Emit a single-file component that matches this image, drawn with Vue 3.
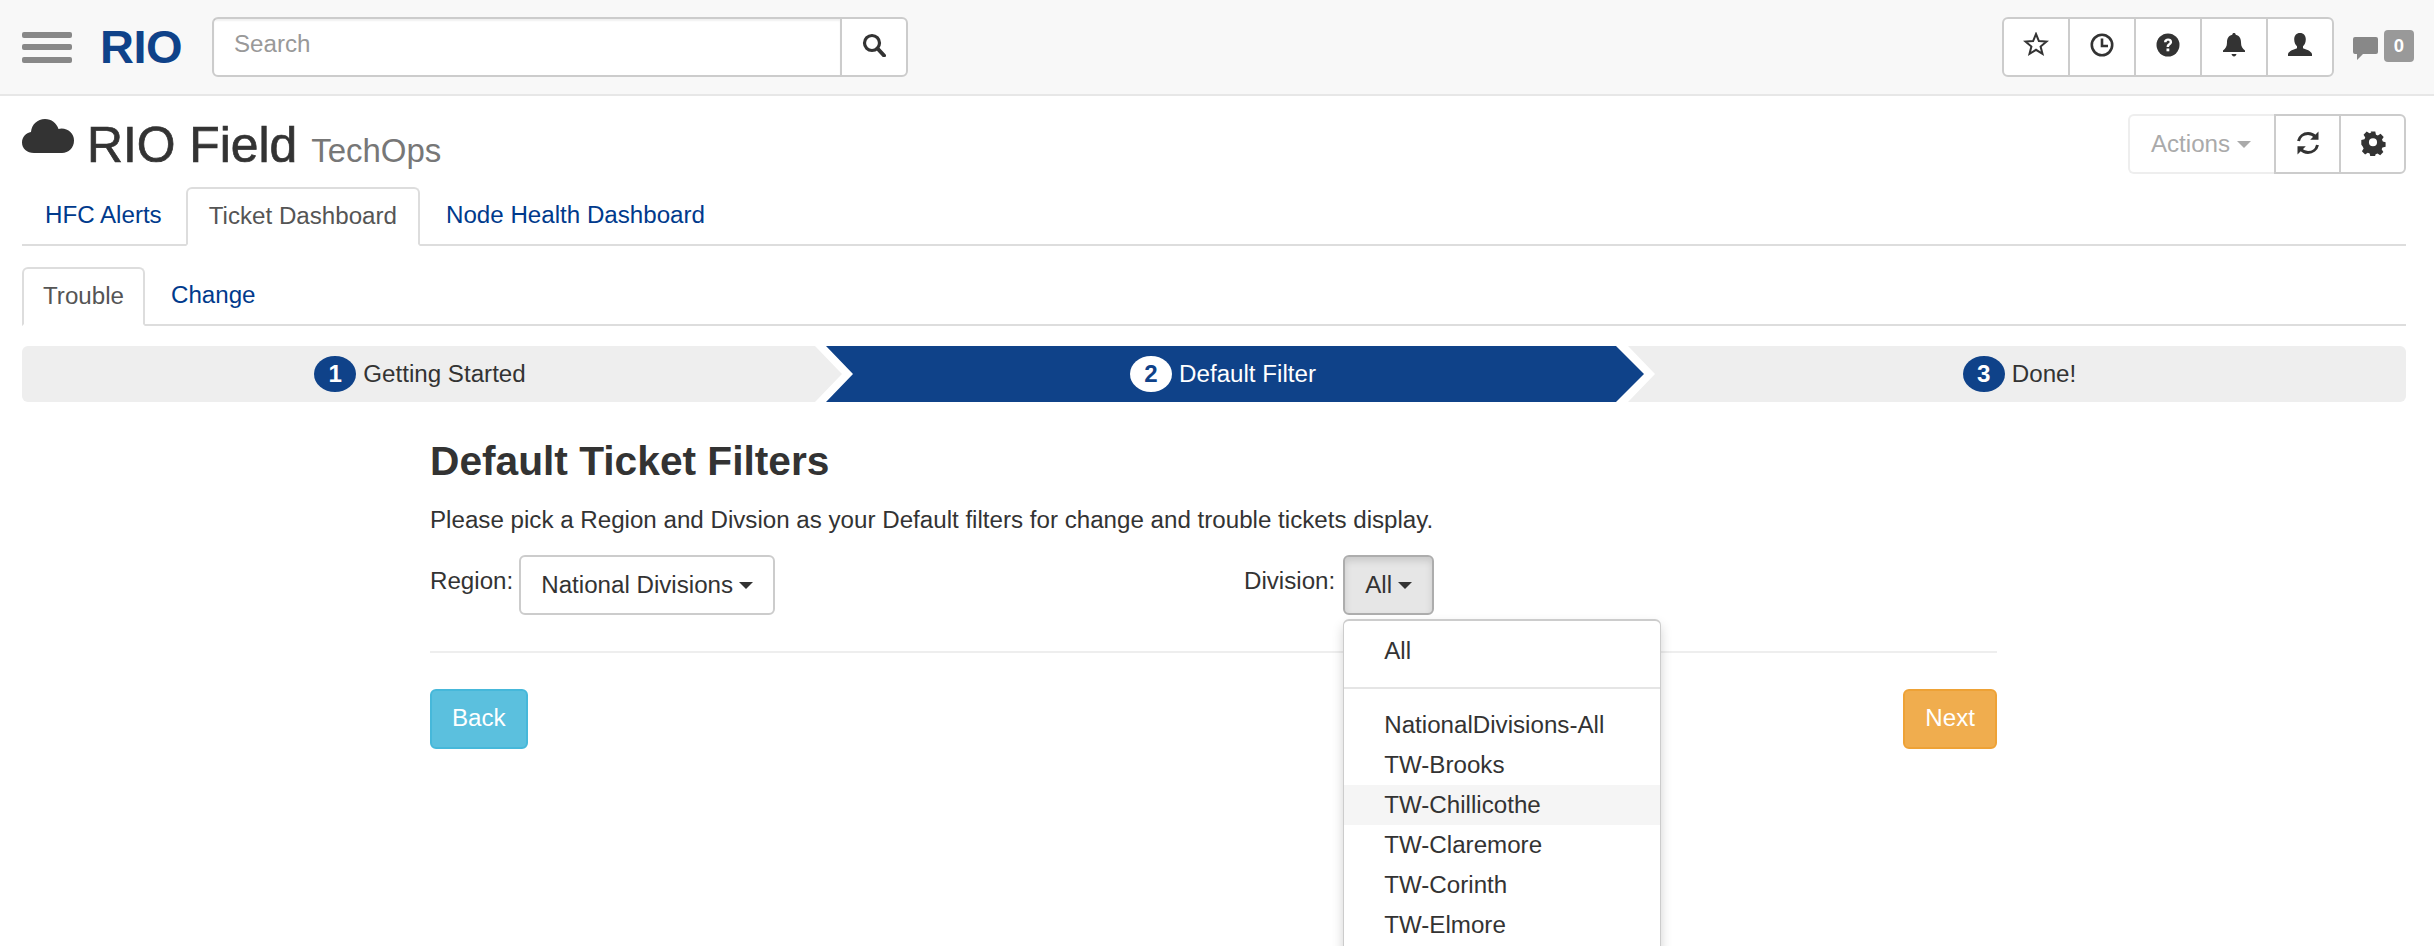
<template>
  <div class="page">
    <nav class="navbar">
      <div class="burger"><span></span><span></span><span></span></div>
      <div class="logo">RIO</div>
      <div class="search">
        <div class="search-input">Search</div>
        <div class="search-btn">
          <svg width="24" height="24" viewBox="0 0 24 24"><circle cx="10" cy="10" r="7.5" fill="none" stroke="#333" stroke-width="3.2"/><path d="M15.5 15.5L22 22.5" stroke="#333" stroke-width="4" stroke-linecap="round"/></svg>
        </div>
      </div>
      <div class="nav-right">
        <div class="btn-group">
          <div class="icon-btn">
            <svg width="26" height="26" viewBox="0 0 26 26"><path d="M13 2l2.9 7.1 7.6.5-5.900 4.900 1.900 7.400L13 17.800l-6.500 4.100 1.900-7.400-5.900-4.900 7.600-.5z" fill="none" stroke="#333" stroke-width="2"/></svg>
          </div>
          <div class="icon-btn">
            <svg width="26" height="26" viewBox="0 0 26 26"><circle cx="13" cy="13" r="10.2" fill="none" stroke="#333" stroke-width="2.6"/><path d="M13 6.5V14h6" fill="none" stroke="#333" stroke-width="2.6"/></svg>
          </div>
          <div class="icon-btn">
            <svg width="26" height="26" viewBox="0 0 26 26"><circle cx="13" cy="13" r="11.5" fill="#333"/><path d="M9 10.2c0-2.4 1.8-3.6 4.1-3.6 2.3 0 4 1.2 4 3.3 0 2.700-3 2.800-3 5h-2.500c0-3.300 3-3.400 3-4.900 0-.8-.6-1.300-1.500-1.300-1 0-1.500.6-1.600 1.500z" fill="#fff"/><rect x="11.500" y="16.500" width="2.800" height="2.800" fill="#fff"/></svg>
          </div>
          <div class="icon-btn">
            <svg width="24" height="26" viewBox="0 0 24 26"><path d="M12 1c1 0 1.700.7 1.700 1.700C17.500 3.500 19 6.500 19 10.500c0 4 1.500 6 4 8v1.500H1v-1.500c2.500-2 4-4 4-8 0-4 1.500-7 5.300-7.800C10.300 1.700 11 1 12 1z" fill="#333"/><path d="M9.500 22h5c-.4 1.600-1.200 2.500-2.500 2.500S9.900 23.600 9.500 22z" fill="#333"/></svg>
          </div>
          <div class="icon-btn">
            <svg width="26" height="26" viewBox="0 0 26 26"><path d="M13 1c3.700 0 5.800 2.500 5.800 6.300 0 3-1.200 5.700-2.800 6.900v2c3 1.200 8 2.400 9 5.800v2H1v-2c1-3.400 6-4.600 9-5.800v-2C8.400 13 7.200 10.300 7.200 7.300 7.200 3.500 9.300 1 13 1z" fill="#333"/></svg>
          </div>
        </div>
        <svg class="chat" width="25" height="24" viewBox="0 0 25 24"><path d="M2 0h21a2 2 0 0 1 2 2v13a2 2 0 0 1-2 2H10l-6 6v-6H2a2 2 0 0 1-2-2V2a2 2 0 0 1 2-2z" fill="#888"/></svg>
        <span class="badge">0</span>
      </div>
    </nav>

    <main class="main">
      <header class="title-row">
        <svg class="cloud" width="52" height="34" viewBox="0 0 52 34"><path d="M12 34C5 34 0 29.500 0 23.500 0 18 4 14 9 13 9.500 5.500 15.500 0 23 0c6.500 0 11.500 4 13.500 10 1-.3 2-.5 3-.5C46.500 9.500 52 14.500 52 21.500 52 29 46.500 34 40 34z" fill="#333"/></svg>
        <h1>RIO Field <small>TechOps</small></h1>
        <div class="actions">
          <div class="actions-btn">Actions <i class="caret"></i></div>
          <div class="icon-btn wide">
            <svg width="26" height="26" viewBox="0 0 26 26"><path d="M3.500 11C4.500 6.500 8.500 3.500 13 3.500c3 0 5.500 1.200 7.300 3.200" fill="none" stroke="#333" stroke-width="3"/><path d="M23.500 1.500v8.300h-8.300z" fill="#333"/><path d="M22.500 15c-1 4.500-5 7.500-9.500 7.500-3 0-5.500-1.200-7.300-3.200" fill="none" stroke="#333" stroke-width="3"/><path d="M2.500 24.500v-8.300h8.300z" fill="#333"/></svg>
          </div>
          <div class="icon-btn wide">
            <svg width="26" height="26" viewBox="0 0 26 26"><path fill-rule="evenodd" d="M10.500 1h5l.8 3.500 2.100.9 3-1.900 3.500 3.500-1.900 3 .9 2.100 3.100.8v5l-3.500.8-.9 2.100 1.900 3-3.500 3.500-3-1.900-2.100.9-.8 2.700h-5l-.8-3.500-2.100-.9-3 1.900-3.500-3.500 1.900-3-.9-2.100L0 15.500v-5l3.500-.8.9-2.100-1.900-3L6 1.100l3 1.900 2.100-.9z M13 8.500a4.500 4.500 0 1 0 0 9 4.500 4.500 0 0 0 0-9z" fill="#333" transform="translate(1.300 .6) scale(.9)"/></svg>
          </div>
        </div>
      </header>

      <div class="tabs">
        <a v-for="t in tabs" :key="t" class="tab" :class="{ active: t === 'Ticket Dashboard' }">{{ t }}</a>
      </div>
      <div class="tabs sub">
        <a v-for="t in subTabs" :key="t" class="tab" :class="{ active: t === 'Trouble' }">{{ t }}</a>
      </div>

      <div class="wizard">
        <div v-for="(s, i) in steps" :key="s" class="step" :class="['step-' + (i + 1), { current: i === 1 }]">
          <span class="num">{{ i + 1 }}</span>
          <span>{{ s }}</span>
        </div>
      </div>

      <section class="content">
        <h2>Default Ticket Filters</h2>
        <p>Please pick a Region and Divsion as your Default filters for change and trouble tickets display.</p>
        <div class="filters">
          <div class="filter region">
            <label>Region:</label>
            <div class="select">National Divisions <i class="caret dark"></i></div>
          </div>
          <div class="filter">
            <label>Division:</label>
            <div class="dropdown">
              <div class="select open">All <i class="caret dark"></i></div>
              <ul class="menu">
                <li class="first">All</li>
                <li class="divider"></li>
                <li v-for="d in divisions" :key="d" :class="{ hover: d === 'TW-Chillicothe' }">{{ d }}</li>
              </ul>
            </div>
          </div>
        </div>
        <hr />
        <div class="pager">
          <div class="btn back">Back</div>
          <div class="btn next">Next</div>
        </div>
      </section>
    </main>
  </div>
</template>

<script setup>
const tabs = ["HFC Alerts", "Ticket Dashboard", "Node Health Dashboard"];
const subTabs = ["Trouble", "Change"];
const steps = ["Getting Started", "Default Filter", "Done!"];
const divisions = [
  "NationalDivisions-All",
  "TW-Brooks",
  "TW-Chillicothe",
  "TW-Claremore",
  "TW-Corinth",
  "TW-Elmore",
];
</script>

<style>
html,
body {
  margin: 0;
  overflow: hidden;
  background: #fff;
}
</style>

<style scoped>
.page {
  width: 2434px;
  height: 946px;
  overflow: hidden;
  font-family: "Liberation Sans", Arial, sans-serif;
  font-size: 24.15px;
  color: #333;
}

.navbar {
  height: 94px;
  box-sizing: content-box;
  display: flex;
  align-items: center;
  padding: 0 20px 0 22px;
  background: #f8f8f8;
  border-bottom: 2px solid #e7e7e7;
}

.burger {
  width: 50px;
  display: flex;
  flex-direction: column;
  gap: 6.500px;
}
.burger span {
  height: 6px;
  border-radius: 2px;
  background: #888;
}

.logo {
  margin-left: 28px;
  width: 84px;
  font-size: 47px;
  font-weight: 700;
  color: #0f4289;
  letter-spacing: -0.500px;
  transform: translateY(-1px);
}

.search {
  margin-left: 28px;
  width: 696px;
  height: 60px;
  display: flex;
  box-sizing: border-box;
  border: 2px solid #ccc;
  border-radius: 6px;
  background: #fff;
}
.search-input {
  flex: 1;
  padding: 0 20px;
  line-height: 49px;
  color: #999;
  box-shadow: inset 0 2px 2px rgba(0, 0, 0, 0.06);
}
.search-btn {
  width: 66px;
  border-left: 2px solid #ccc;
  display: flex;
  align-items: center;
  justify-content: center;
  padding-bottom: 4px;
  box-sizing: border-box;
}

.nav-right {
  margin-left: auto;
  display: flex;
  align-items: center;
}
.btn-group {
  display: flex;
  height: 60px;
  box-sizing: border-box;
  border: 2px solid #ccc;
  border-radius: 6px;
  background: #fff;
}
.btn-group .icon-btn {
  width: 66px;
  box-sizing: border-box;
  display: flex;
  align-items: center;
  justify-content: center;
  padding-bottom: 4px;
  border-left: 2px solid #ccc;
}
.btn-group .icon-btn:first-child {
  width: 64px;
  border-left: 0;
}
.chat {
  margin: 3px 0 0 19px;
}
.badge {
  margin: 0 0 2px 6px;
  width: 30px;
  height: 32px;
  border-radius: 4px;
  background: #999;
  color: #fff;
  font-size: 18.500px;
  font-weight: 700;
  line-height: 32px;
  text-align: center;
}

.main {
  padding: 0 28px 0 22px;
}

.title-row {
  height: 91px;
  display: flex;
  position: relative;
}
.cloud {
  margin-top: 23px;
}
h1 {
  margin: 24px 0 0 13px;
  font-size: 49.8px;
  font-weight: 400;
  -webkit-text-stroke: 0.7px #333;
  line-height: 50px;
  white-space: nowrap;
}
h1 small {
  margin-left: 0;
  font-size: 33px;
  font-weight: 400;
  -webkit-text-stroke: 0;
  color: #777;
}
.actions {
  margin-left: auto;
  margin-top: 18px;
  height: 60px;
  display: flex;
}
.actions-btn {
  width: 146px;
  box-sizing: border-box;
  display: flex;
  align-items: center;
  justify-content: center;
  gap: 7px;
  padding-right: 2px;
  border: 2px solid #eee;
  border-right: 0;
  border-radius: 6px 0 0 6px;
  color: #aaa;
}
.caret {
  display: inline-block;
  width: 0;
  height: 0;
  border-top: 7px solid #aaa;
  border-left: 7px solid transparent;
  border-right: 7px solid transparent;
}
.caret.dark {
  border-top-color: #333;
}
.icon-btn.wide {
  width: 67px;
  box-sizing: border-box;
  display: flex;
  align-items: center;
  justify-content: center;
  padding-bottom: 3px;
  border: 2px solid #ccc;
}
.icon-btn.wide:last-child {
  margin-left: -2px;
  border-radius: 0 6px 6px 0;
}

.tabs {
  display: flex;
  height: 59px;
  box-sizing: border-box;
  border-bottom: 2px solid #ddd;
}
.tabs.sub {
  margin-top: 21px;
}
.tab {
  padding: 0 23px;
  line-height: 56px;
  color: #003a8c;
  white-space: nowrap;
}
.tab.active {
  height: 59px;
  box-sizing: border-box;
  margin: 0 3px 0 1px;
  padding: 0 21px;
  line-height: 54px;
  color: #555;
  background: #fff;
  border: 2px solid #ddd;
  border-bottom-color: #fff;
  border-radius: 6px 6px 0 0;
}
.tabs.sub .tab.active {
  margin: 0 3px 0 0;
  padding: 0 19px;
}

.wizard {
  margin-top: 20px;
  height: 56px;
  display: flex;
  border-radius: 6px;
  overflow: hidden;
}
.step {
  display: flex;
  align-items: center;
  justify-content: center;
  gap: 7px;
  background: #eee;
  white-space: nowrap;
}
.step-1 {
  width: 820px;
  padding-right: 24px;
  box-sizing: border-box;
  clip-path: polygon(0 0, calc(100% - 27px) 0, 100% 50%, calc(100% - 27px) 100%, 0 100%);
}
.step-2 {
  width: 818px;
  margin-left: -16px;
  padding-right: 24px;
  box-sizing: border-box;
  clip-path: polygon(0 0, calc(100% - 28px) 0, 100% 50%, calc(100% - 28px) 100%, 0 100%, 27px 50%);
}
.step-3 {
  flex: 1;
  margin-left: -16px;
  padding-left: 5px;
  clip-path: polygon(0 0, 100% 0, 100% 100%, 0 100%, 27px 50%);
}
.step.current {
  background: #0f4289;
  color: #fff;
}
.num {
  width: 42px;
  height: 36px;
  border-radius: 50%;
  background: #0f4289;
  color: #fff;
  font-weight: 700;
  line-height: 36px;
  text-align: center;
}
.current .num {
  background: #fff;
  color: #0f4289;
}

.content {
  margin-left: 408px;
  width: 1567px;
  padding-top: 33px;
}
h2 {
  margin: 0;
  font-size: 40.7px;
  font-weight: 700;
  line-height: 52px;
}
p {
  margin: 16px 0 0;
  line-height: 34px;
}
.filters {
  margin-top: 18px;
  display: flex;
}
.filter {
  display: flex;
  align-items: flex-start;
}
.region {
  width: 814px;
}
label {
  margin-right: 6px;
  line-height: 52px;
  white-space: nowrap;
}
.filter:last-child label {
  margin-right: 8px;
}
.select {
  height: 60px;
  padding: 0 20px;
  box-sizing: border-box;
  display: flex;
  align-items: center;
  gap: 6px;
  border: 2px solid #ccc;
  border-radius: 6px;
  white-space: nowrap;
}
.select.open {
  background: #e6e6e6;
  border-color: #adadad;
  box-shadow: inset 0 4px 7px rgba(0, 0, 0, 0.125);
}
.dropdown {
  position: relative;
}
.menu {
  position: absolute;
  top: 64px;
  left: 0;
  z-index: 5;
  width: 318px;
  height: 500px;
  margin: 0;
  padding: 10px 0;
  box-sizing: border-box;
  list-style: none;
  background: #fff;
  border: 1px solid #ccc;
  border-top-width: 2px;
  border-radius: 6px;
  box-shadow: 0 6px 12px rgba(0, 0, 0, 0.175);
}
.menu li {
  height: 40px;
  padding: 0 40px;
  line-height: 40px;
  white-space: nowrap;
}
.menu li.divider {
  height: 2px;
  margin: 16px 0;
  padding: 0;
  background: #e5e5e5;
}
.menu li.hover {
  background: #f5f5f5;
}
hr {
  margin: 36px 0 0;
  height: 2px;
  border: 0;
  background: #eee;
}
.pager {
  margin-top: 36px;
  display: flex;
  justify-content: space-between;
}
.btn {
  height: 60px;
  padding: 0 20px;
  box-sizing: border-box;
  color: #fff;
  line-height: 54px;
  border-radius: 6px;
  border: 2px solid transparent;
}
.back {
  background: #5bc0de;
  border-color: #46b8da;
}
.next {
  background: #f0ad4e;
  border-color: #eea236;
}
</style>
